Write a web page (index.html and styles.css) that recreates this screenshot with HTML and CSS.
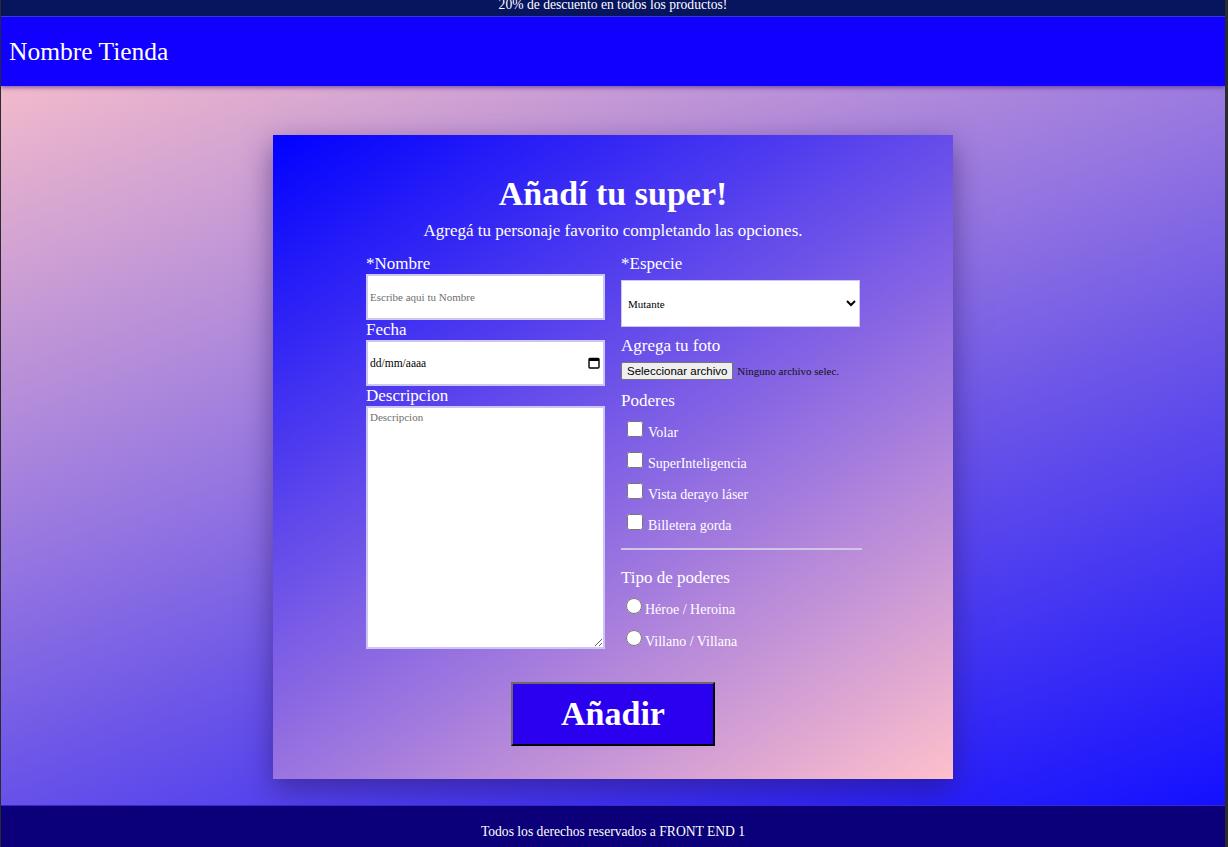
FILE: index.html
```html
<!DOCTYPE html>
<html lang="es">
<head>
<meta charset="utf-8">
<title>Nombre Tienda</title>
<link rel="stylesheet" href="styles.css">
</head>
<body>
<div class="promo"><p>20% de descuento en todos los productos!</p></div>
<header class="header"><h1 class="brand">Nombre Tienda</h1></header>
<main class="main">
  <form class="card">
    <h2 class="title">Añadí tu super!</h2>
    <p class="subtitle">Agregá tu personaje favorito completando las opciones.</p>
    <div class="cols">
      <div class="col">
        <label class="lbl">*Nombre</label>
        <input class="field" type="text" placeholder="Escribe aqui tu Nombre">
        <label class="lbl">Fecha</label>
        <div class="field date"><span>dd/mm/aaaa</span>
          <svg width="12" height="12" viewBox="0 0 12 12"><rect x="1" y="1.5" width="10" height="9.5" rx="1" fill="none" stroke="#000" stroke-width="1.4"/><rect x="1" y="1.5" width="10" height="2.5" fill="#000"/></svg>
        </div>
        <label class="lbl">Descripcion</label>
        <textarea class="field area" placeholder="Descripcion"></textarea>
      </div>
      <div class="col">
        <label class="lbl">*Especie</label>
        <select class="field select"><option>Mutante</option></select>
        <label class="lbl lbl-foto">Agrega tu foto</label>
        <div class="file"><span class="file-btn">Seleccionar archivo</span><span class="file-name">Ninguno archivo selec.</span></div>
        <label class="lbl lbl-pod">Poderes</label>
        <label class="check"><input type="checkbox">Volar</label>
        <label class="check"><input type="checkbox">SuperInteligencia</label>
        <label class="check"><input type="checkbox">Vista derayo láser</label>
        <label class="check"><input type="checkbox">Billetera gorda</label>
        <hr class="sep">
        <label class="lbl">Tipo de poderes</label>
        <label class="radio radio-first"><input type="radio" name="tipo">Héroe / Heroina</label>
        <label class="radio"><input type="radio" name="tipo">Villano / Villana</label>
      </div>
    </div>
    <button class="submit" type="button">Añadir</button>
  </form>
</main>
<footer class="footer"><p>Todos los derechos reservados a FRONT END 1</p></footer>
</body>
</html>
```
FILE: styles.css
```css
html {
  background: #2b2b2b;
}
body {
  margin: 0 3px 0 1px;
  font-family: "Liberation Serif", "Times New Roman", serif;
  color: #fff;
}
.promo {
  height: 16px;
  overflow: hidden;
  background: #07155e;
  border-bottom: 1px solid #3b3bd6;
  text-align: center;
}
.promo p {
  margin: -3px 0 0;
  font-size: 13.6px;
  line-height: 16px;
}
.header {
  position: relative;
  z-index: 2;
  height: 69px;
  display: flex;
  align-items: center;
  padding-left: 8px;
  background: #1100ff;
  box-shadow: 0 2px 4px rgba(70, 30, 130, 0.55);
}
.brand {
  margin: 0;
  font-weight: normal;
  font-size: 25.5px;
}
.main {
  padding: 49px 0 26px;
  background: linear-gradient(160deg, #f2bacb 0%, #9878e0 40%, #6a54e8 60%, #1410ff 100%);
}
.card {
  width: 680px;
  height: 644px;
  box-sizing: border-box;
  margin: 0 auto;
  padding-top: 39px;
  background: linear-gradient(148deg, #0000ff 0%, #ffc0cb 100%);
  box-shadow: 0 10px 28px rgba(40, 20, 100, 0.55);
  display: flex;
  flex-direction: column;
  align-items: center;
}
.title {
  margin: 0;
  font-size: 34px;
  line-height: 39px;
  font-weight: bold;
}
.subtitle {
  margin: 8px 0 0;
  font-size: 17px;
  line-height: 20px;
}
.cols {
  margin-top: 13px;
  width: 494px;
  display: grid;
  grid-template-columns: 239px 239px;
  column-gap: 16px;
  align-items: start;
}
.col {
  display: flex;
  flex-direction: column;
  align-items: flex-start;
}
.lbl {
  font-size: 17px;
  line-height: 20px;
}
.field {
  box-sizing: border-box;
  width: 239px;
  height: 46px;
  margin: 0;
  background: #fff;
  border: 2px solid #cdc6f2;
  font-family: "Liberation Serif", serif;
  font-size: 11px;
  color: #000;
  padding: 0 2px;
  outline: none;
}
.field::placeholder {
  color: #6e6e6e;
}
.date {
  display: flex;
  align-items: center;
  justify-content: space-between;
  padding: 0 2px 0 2px;
  font-size: 11.5px;
}
.date svg {
  margin-right: 1px;
}
.area {
  height: 243px;
  padding: 3px 2px;
  resize: both;
}
.select {
  margin-top: 6px;
  height: 47px;
  padding: 0 2px;
  font-size: 11px;
  border-width: 1px;
}
.lbl-foto {
  margin-top: 9px;
}
.file {
  margin-top: 6px;
  display: flex;
  align-items: center;
  height: 18px;
}
.file-btn {
  box-sizing: border-box;
  height: 18px;
  padding: 0 5px;
  display: flex;
  align-items: center;
  background: #efefef;
  border: 1px solid #767676;
  border-radius: 2px;
  color: #000;
  font-family: "Liberation Sans", Arial, sans-serif;
  font-size: 11.5px;
}
.file-name {
  margin-left: 4px;
  font-size: 11px;
  color: #111;
}
.lbl-pod {
  margin-top: 11px;
}
.check {
  display: block;
  height: 31px;
  line-height: 31px;
  font-size: 14px;
}
.lbl-pod + .check {
  margin-top: 6px;
}
.check input {
  width: 16px;
  height: 16px;
  margin: 0 5px 0 6px;
  vertical-align: baseline;
}
.sep {
  width: 241px;
  box-sizing: border-box;
  margin: 7px 0 18px;
  border: none;
  border-top: 2px solid #d2c6e6;
  height: 0;
}
.radio {
  display: block;
  height: 32px;
  line-height: 32px;
  font-size: 14px;
}
.radio-first {
  margin-top: 6px;
}
.radio input {
  width: 16px;
  height: 16px;
  margin: 0 3px 0 5px;
  vertical-align: baseline;
}
.submit {
  margin-top: 24px;
  width: 204px;
  height: 64px;
  background: #2a00ef;
  border: 2px outset #6a6a6a;
  border-right-color: #2e2846;
  border-bottom-color: #2e2846;
  color: #fff;
  font-family: "Liberation Serif", serif;
  font-weight: bold;
  font-size: 34px;
  padding: 0;
}
.footer {
  background: #0b007a;
  border-top: 1px solid #3828c8;
  padding: 18px 0 20px;
  text-align: center;
}
.footer p {
  margin: 0;
  font-size: 13.6px;
  line-height: 16px;
}
```
